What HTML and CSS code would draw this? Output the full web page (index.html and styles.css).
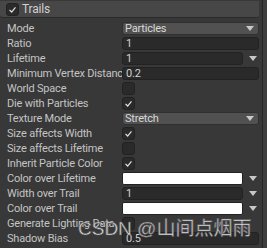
FILE: index.html
```html
<!DOCTYPE html>
<html>
<head>
<meta charset="utf-8">
<link rel="stylesheet" href="styles.css">
</head>
<body>
<div class="inspector">
  <div class="main">
    <div class="header">
      <span class="cb"><svg viewBox="0 0 13 13"><polyline points="3,7 5.5,9.5 10,4" /></svg></span>
      <span class="title">Trails</span>
    </div>
    <div class="rows">
      <div class="row"><span class="label">Mode</span><div class="dropdown"><span>Particles</span><span class="arrow"></span></div></div>
      <div class="row"><span class="label">Ratio</span><div class="field">1</div></div>
      <div class="row"><span class="label">Lifetime</span><div class="withmenu"><div class="field">1</div><span class="arrow"></span></div></div>
      <div class="row"><span class="label">Minimum Vertex Distance</span><div class="field">0.2</div></div>
      <div class="row"><span class="label">World Space</span><span class="cb"></span></div>
      <div class="row"><span class="label">Die with Particles</span><span class="cb"><svg viewBox="0 0 13 13"><polyline points="3,7 5.5,9.5 10,4" /></svg></span></div>
      <div class="row"><span class="label">Texture Mode</span><div class="dropdown"><span>Stretch</span><span class="arrow"></span></div></div>
      <div class="row"><span class="label">Size affects Width</span><span class="cb"><svg viewBox="0 0 13 13"><polyline points="3,7 5.5,9.5 10,4" /></svg></span></div>
      <div class="row"><span class="label">Size affects Lifetime</span><span class="cb"></span></div>
      <div class="row"><span class="label">Inherit Particle Color</span><span class="cb"><svg viewBox="0 0 13 13"><polyline points="3,7 5.5,9.5 10,4" /></svg></span></div>
      <div class="row"><span class="label">Color over Lifetime</span><div class="withmenu"><div class="color"></div><span class="arrow"></span></div></div>
      <div class="row"><span class="label">Width over Trail</span><div class="withmenu"><div class="field">1</div><span class="arrow"></span></div></div>
      <div class="row"><span class="label">Color over Trail</span><div class="withmenu"><div class="color"></div><span class="arrow"></span></div></div>
      <div class="row"><span class="label">Generate Lighting Data</span><span class="cb"></span></div>
      <div class="row"><span class="label">Shadow Bias</span><div class="field">0.5</div></div>
    </div>
  </div>
  <div class="scrollbar"></div>
  <div class="watermark">CSDN @山间点烟雨</div>
</div>
</body>
</html>
```

FILE: styles.css
```css
html, body {
  margin: 0;
  padding: 0;
  background: #383838;
}
.inspector {
  position: relative;
  display: flex;
  width: 267px;
  height: 248px;
  overflow: hidden;
  font-family: Roboto, "Liberation Sans", sans-serif;
  font-size: 11px;
  letter-spacing: -0.2px;
  color: #c4c4c4;
}
.main {
  flex: 1;
  display: flex;
  flex-direction: column;
  padding-top: 1px;
}
.header {
  height: 16px;
  margin: 0 3px 0 0;
  background: #474747;
  border-bottom: 1px solid #2a2a2a;
  border-radius: 0 0 3px 3px;
  display: flex;
  align-items: center;
  padding-left: 6px;
  gap: 3px;
  font-size: 12px;
  color: #d0d0d0;
}
.rows {
  display: flex;
  flex-direction: column;
  padding: 3px 3px 0 7px;
}
.row {
  height: 15px;
  display: grid;
  grid-template-columns: 115px 1fr;
  align-items: center;
}
.label {
  white-space: nowrap;
  overflow: hidden;
}
.cb {
  width: 11px;
  height: 11px;
  background: #2a2a2a;
  border: 1px solid #222;
  border-radius: 3px;
  display: block;
}
.cb svg {
  width: 11px;
  height: 11px;
  display: block;
}
.cb polyline {
  fill: none;
  stroke: #e6e6e6;
  stroke-width: 1.4;
}
.field {
  height: 11px;
  background: #2a2a2a;
  border: 1px solid #222;
  border-radius: 3px;
  padding-left: 3px;
  line-height: 11px;
  color: #d2d2d2;
}
.dropdown {
  height: 11px;
  background: #515151;
  border: 1px solid #303030;
  border-radius: 3px;
  padding-left: 2px;
  line-height: 11px;
  color: #d8d8d8;
  display: flex;
  justify-content: space-between;
  align-items: center;
}
.arrow {
  width: 0;
  height: 0;
  border-left: 4px solid transparent;
  border-right: 4px solid transparent;
  border-top: 5px solid #c8c8c8;
  margin-right: 4px;
}
.withmenu {
  display: flex;
  align-items: center;
}
.withmenu .field, .withmenu .color {
  flex: 1;
}
.withmenu .arrow {
  margin: 0 2px 0 6px;
}
.color {
  height: 11px;
  background: #ffffff;
  border: 1px solid #222;
  border-radius: 2px;
}
.scrollbar {
  width: 4px;
  border-left: 1px solid #262626;
  background: #3e3e3e;
}
.watermark {
  position: absolute;
  left: 78px;
  top: 213px;
  font-family: "Liberation Sans", "Noto Sans CJK SC", sans-serif;
  font-size: 19px;
  letter-spacing: 0;
  color: #e0e0e0;
  -webkit-text-stroke: 0.6px #555;
  white-space: nowrap;
}
```
